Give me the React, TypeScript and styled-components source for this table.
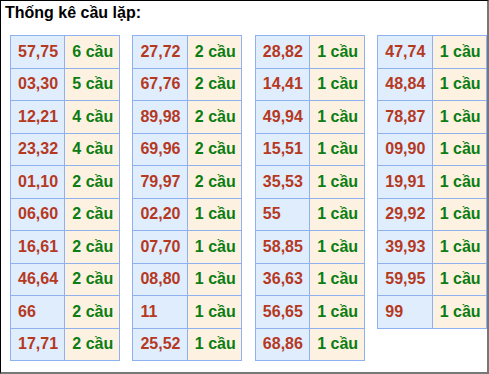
import styled, {createGlobalStyle} from "styled-components";

const GlobalStyle = createGlobalStyle`
  html, body {
    margin: 0;
    padding: 0;
    background: #ffffff;
  }
`;

const data: [string, number][][] = [
    [["57,75", 6], ["03,30", 5], ["12,21", 4], ["23,32", 4], ["01,10", 2], ["06,60", 2], ["16,61", 2], ["46,64", 2], ["66", 2], ["17,71", 2]],
    [["27,72", 2], ["67,76", 2], ["89,98", 2], ["69,96", 2], ["79,97", 2], ["02,20", 1], ["07,70", 1], ["08,80", 1], ["11", 1], ["25,52", 1]],
    [["28,82", 1], ["14,41", 1], ["49,94", 1], ["15,51", 1], ["35,53", 1], ["55", 1], ["58,85", 1], ["36,63", 1], ["56,65", 1], ["68,86", 1]],
    [["47,74", 1], ["48,84", 1], ["78,87", 1], ["09,90", 1], ["19,91", 1], ["29,92", 1], ["39,93", 1], ["59,95", 1], ["99", 1]],
];

export default function App() {
    return (
        <>
            <GlobalStyle/>
            <Frame>
                <Title>Thống kê cầu lặp:</Title>
                <Columns>
                    {data.map((col, i) => (
                        <Table key={i}>
                            <tbody>
                            {col.map(([pair, count]) => (
                                <Row key={pair}>
                                    <PairCell>{pair}</PairCell>
                                    <CountCell>{count} cầu</CountCell>
                                </Row>
                            ))}
                            </tbody>
                        </Table>
                    ))}
                </Columns>
            </Frame>
        </>
    );
}

const Frame = styled.div`
  box-sizing: border-box;
  width: 489px;
  height: 374px;
  border-top: 1px solid #000;
  border-left: 1px solid #000;
  border-right: 2px solid #777;
  border-bottom: 2px solid #777;
  padding: 3px 0 0 9px;
  font-family: "Liberation Sans", Arial, sans-serif;
  background: #fff;
`;

const Title = styled.div`
  font-size: 16px;
  font-weight: bold;
  color: #000;
  line-height: 18px;
  margin-left: -5px;
`;

const Columns = styled.div`
  display: grid;
  grid-template-columns: repeat(4, 1fr);
  column-gap: 12.7px;
  align-items: start;
  margin-top: 13px;
`;

const Table = styled.table`
  width: 100%;
  border-collapse: collapse;
  table-layout: fixed;
`;

const Row = styled.tr`
  height: 32.5px;
`;

const Cell = styled.td`
  border: 1px solid #8fb1ef;
  padding: 0 0 0 7px;
  font-size: 16px;
  font-weight: bold;
  line-height: 18px;
  white-space: nowrap;
  text-align: left;
`;

const PairCell = styled(Cell)`
  background: #e0edfd;
  color: #b5391f;
`;

const CountCell = styled(Cell)`
  background: #fdf2e1;
  color: #0b7d12;
`;
